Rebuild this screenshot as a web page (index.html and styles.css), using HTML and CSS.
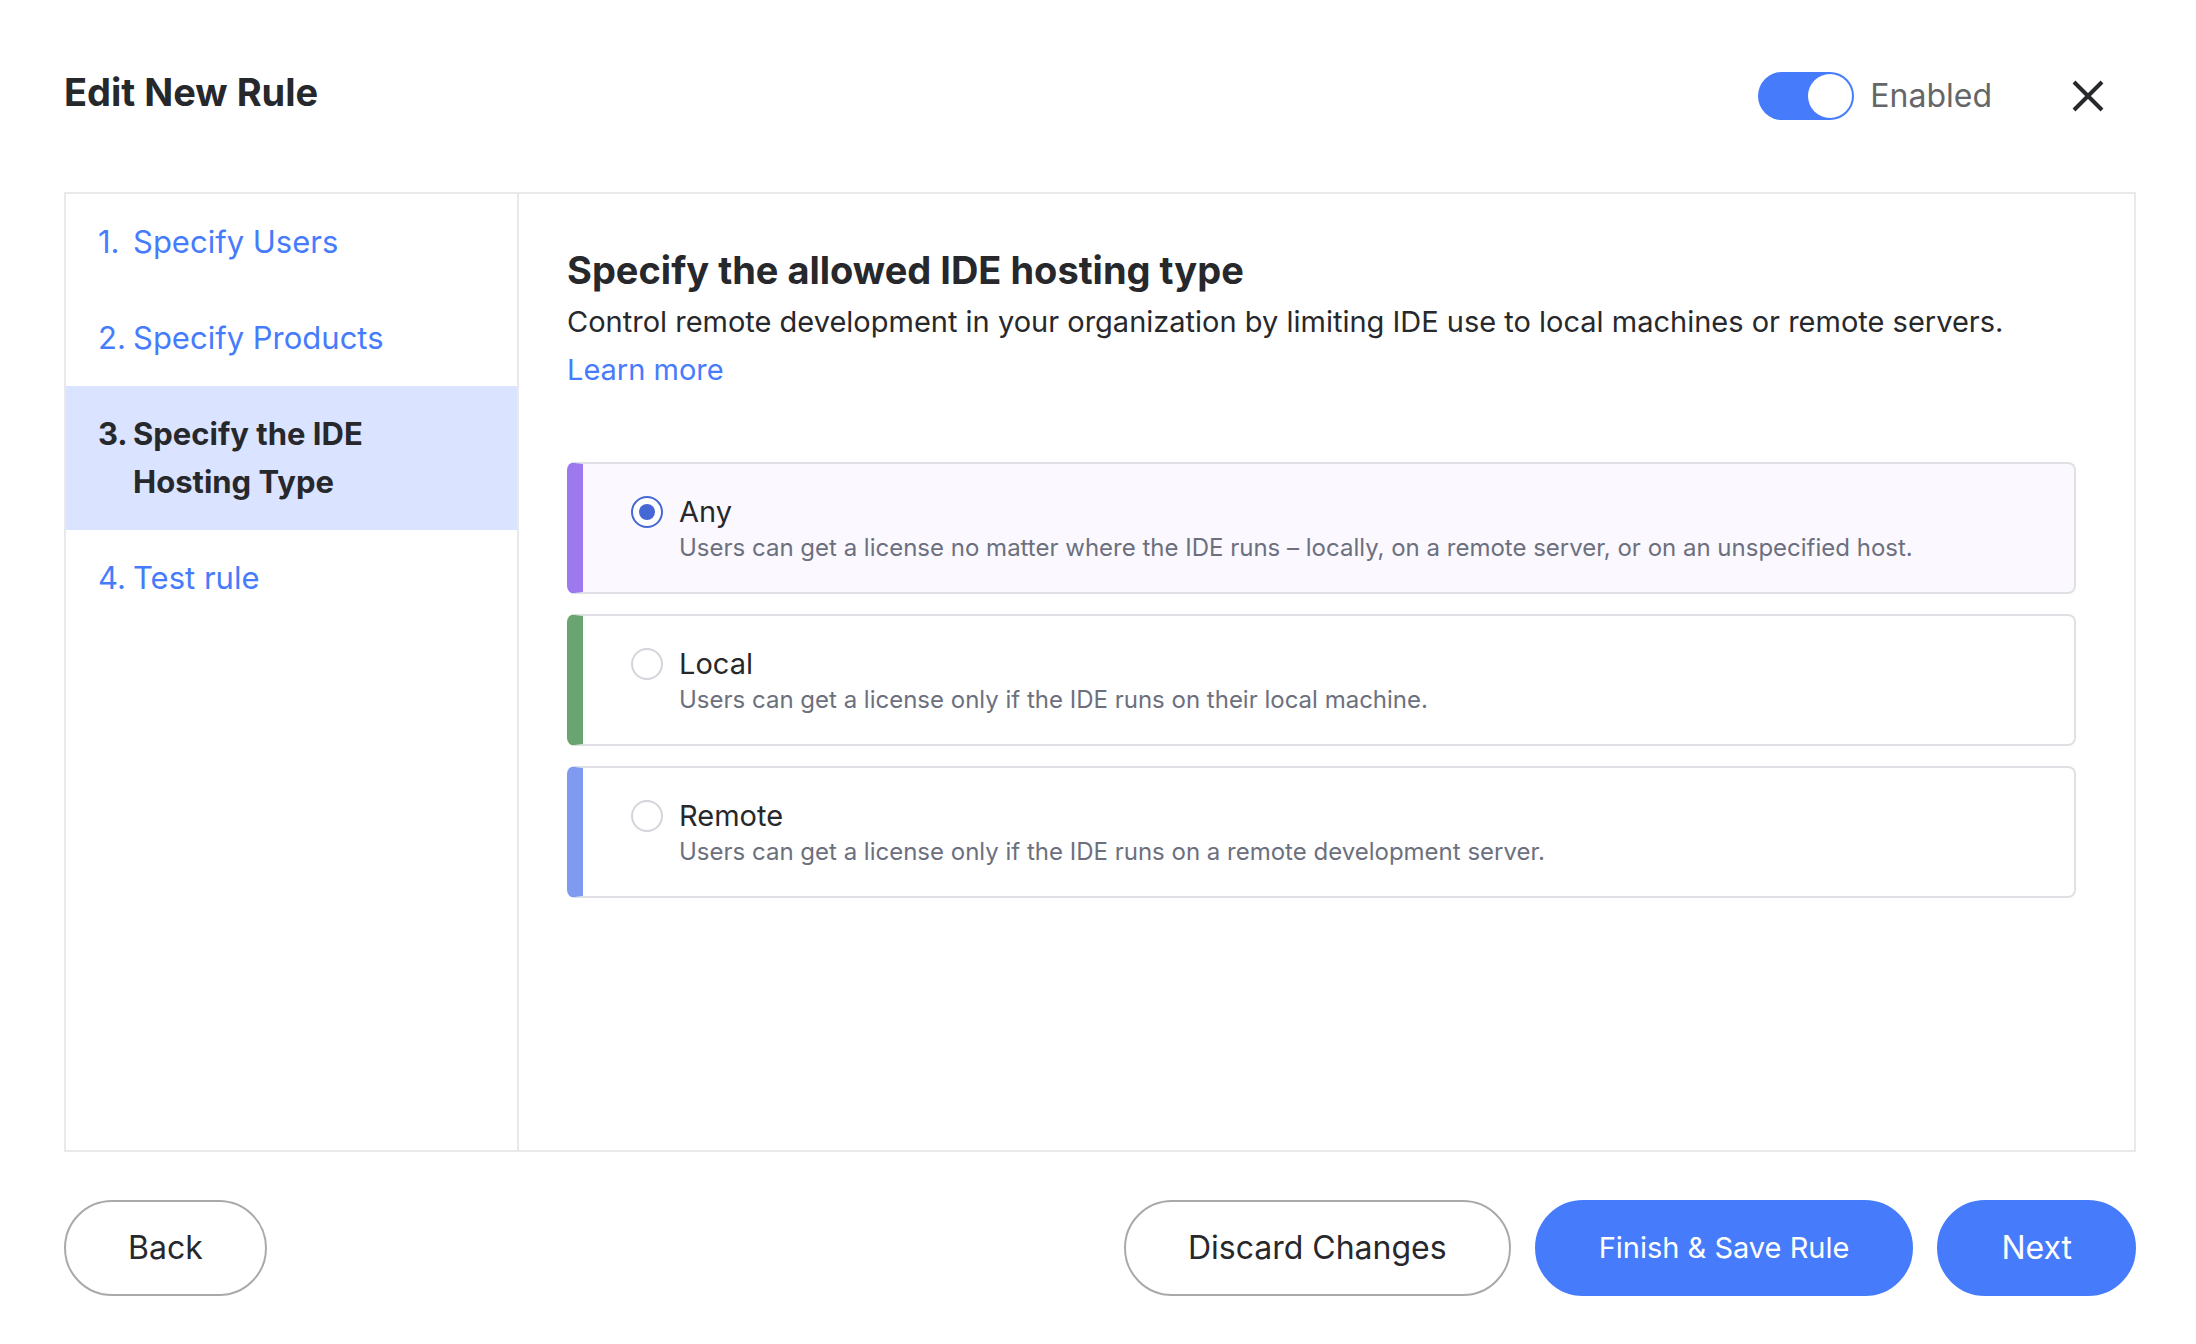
FILE: index.html
```html
<!DOCTYPE html>
<html lang="en">
<head>
<meta charset="utf-8">
<meta name="viewport" content="width=device-width, initial-scale=1">
<title>Edit New Rule</title>
<link rel="stylesheet" href="styles.css">
</head>
<body>
<form class="rule-editor">
  <header class="header">
    <h1 class="heading">Edit New Rule</h1>
    <div class="header-actions">
      <label class="switch">
        <input class="switch-input" type="checkbox" role="switch" checked>
        <span>Enabled</span>
      </label>
      <button class="close" type="button" aria-label="Close">
        <svg class="close-icon" viewBox="0 0 32 32" aria-hidden="true">
          <path d="M2 2 30 30M30 2 2 30" fill="none" stroke="currentColor" stroke-width="4"/>
        </svg>
      </button>
    </div>
  </header>

  <div class="panel">
    <nav class="steps" aria-label="Steps">
      <a class="step" href="#users"><span class="step-number">1.</span><span>Specify Users</span></a>
      <a class="step" href="#products"><span class="step-number">2.</span><span>Specify Products</span></a>
      <a class="step step-current" href="#hosting" aria-current="step"><span class="step-number">3.</span><span>Specify the IDE Hosting Type</span></a>
      <a class="step" href="#test"><span class="step-number">4.</span><span>Test rule</span></a>
    </nav>

    <main class="content" id="hosting">
      <h2 class="heading">Specify the allowed IDE hosting type</h2>
      <p class="intro">Control remote development in your organization by limiting IDE use to local machines or remote servers. <a class="link" href="#learn-more">Learn more</a></p>

      <div class="options" role="radiogroup" aria-label="IDE hosting type">
        <label class="option option-any">
          <input class="radio" type="radio" name="hosting" value="any" checked>
          <span class="option-text">
            <span class="option-title">Any</span>
            <span class="option-note">Users can get a license no matter where the IDE runs – locally, on a remote server, or on an unspecified host.</span>
          </span>
        </label>
        <label class="option option-local">
          <input class="radio" type="radio" name="hosting" value="local">
          <span class="option-text">
            <span class="option-title">Local</span>
            <span class="option-note">Users can get a license only if the IDE runs on their local machine.</span>
          </span>
        </label>
        <label class="option option-remote">
          <input class="radio" type="radio" name="hosting" value="remote">
          <span class="option-text">
            <span class="option-title">Remote</span>
            <span class="option-note">Users can get a license only if the IDE runs on a remote development server.</span>
          </span>
        </label>
      </div>
    </main>
  </div>

  <footer class="footer">
    <button class="button" type="button">Back</button>
    <div class="footer-end">
      <button class="button" type="button">Discard Changes</button>
      <button class="button button-primary button-save" type="submit">Finish &amp; Save Rule</button>
      <button class="button button-primary" type="button">Next</button>
    </div>
  </footer>
</form>
</body>
</html>
```
FILE: styles.css
```css
* {
  box-sizing: border-box;
}

body {
  margin: 0;
  background: #fff;
  color: #27282c;
  font-family: Inter, "Liberation Sans", sans-serif;
  font-size: 32px;
  line-height: 48px;
}

.rule-editor {
  display: flex;
  flex-direction: column;
  min-height: 100vh;
  padding: 64px 60px 48px 64px;
}

.header {
  display: flex;
  justify-content: space-between;
  align-items: flex-start;
  padding-bottom: 64px;
}

.heading {
  margin: 0;
  font-size: 38px;
  line-height: 56px;
  font-weight: 700;
}

.header-actions {
  display: flex;
  align-items: center;
  gap: 64px;
  height: 64px;
  padding-right: 16px;
}

.switch {
  display: flex;
  align-items: center;
  gap: 16px;
  color: #656667;
}

.switch-input {
  appearance: none;
  display: flex;
  justify-content: flex-end;
  width: 96px;
  height: 48px;
  margin: 0;
  padding: 2px;
  border-radius: 24px;
  background: #467cfc;
}

.switch-input::before {
  content: "";
  width: 44px;
  height: 44px;
  border-radius: 50%;
  background: #fff;
}

.switch-input:not(:checked) {
  justify-content: flex-start;
  background: #a9a9aa;
}

.close {
  display: flex;
  padding: 16px;
  border: 0;
  background: none;
  color: #27282c;
}

.close-icon {
  width: 32px;
  height: 32px;
}

.panel {
  display: flex;
  flex: 1;
  border: 2px solid #e9e9ea;
}

.steps {
  flex: none;
  width: 453px;
  border-right: 2px solid #e9e9ea;
  font-size: 31px;
}

.step {
  display: flex;
  padding: 24px 32px;
  color: #467cfc;
  text-decoration: none;
}

.step-number {
  flex: none;
  width: 35px;
}

.step-current {
  padding-right: 96px;
  background: #dae3ff;
  color: #27282c;
  font-weight: 700;
}

.content {
  flex: 1;
  padding: 48px 58px 48px 48px;
}

.intro {
  margin: 0;
  font-size: 29px;
}

.link {
  color: #467cfc;
  text-decoration: none;
}

.options {
  display: flex;
  flex-direction: column;
  gap: 20px;
  padding-top: 68px;
}

.option {
  display: flex;
  gap: 16px;
  padding: 32px 32px 26px 48px;
  border: 2px solid #dfe0e5;
  border-left-width: 16px;
  border-radius: 8px;
}

.option-any {
  border-left-color: #9d79ee;
}

.option-any:has(:checked) {
  background: #fbf8ff;
}

.option-local {
  border-left-color: #69a571;
}

.option-remote {
  border-left-color: #7e9bf0;
}

.radio {
  appearance: none;
  flex: none;
  display: grid;
  place-items: center;
  width: 32px;
  height: 32px;
  margin: 0;
  border: 2px solid #d3d5dc;
  border-radius: 50%;
  background: #fff;
}

.radio:checked {
  border-color: #4668d4;
}

.radio:checked::before {
  content: "";
  width: 16px;
  height: 16px;
  border-radius: 50%;
  background: #4668d4;
}

.option-text {
  display: flex;
  flex-direction: column;
  gap: 2px;
}

.option-title {
  font-size: 29px;
  line-height: 32px;
}

.option-note {
  color: #6c707e;
  font-size: 24px;
  line-height: 36px;
}

.footer {
  display: flex;
  justify-content: space-between;
  padding-top: 48px;
}

.footer-end {
  display: flex;
  gap: 24px;
}

.button {
  padding: 22px 62px;
  border: 2px solid #a9a9aa;
  border-radius: 48px;
  background: #fff;
  color: #27282c;
  font-family: inherit;
  font-size: 32px;
  line-height: 48px;
}

.button-primary {
  border-color: #467cfc;
  background: #467cfc;
  color: #fff;
}

.button-save {
  font-size: 29px;
}
```
